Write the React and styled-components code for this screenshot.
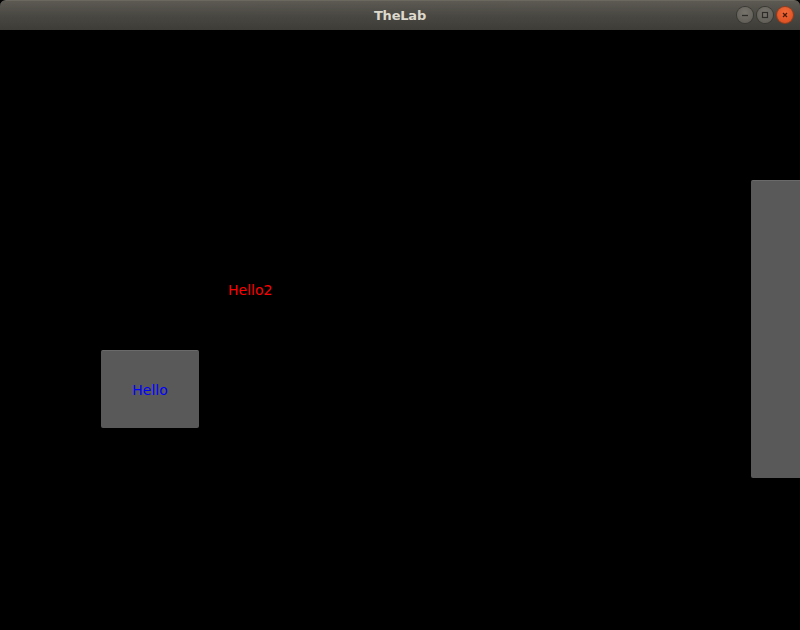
import React from "react";
import styled, { createGlobalStyle } from "styled-components";

const Global = createGlobalStyle`
  html, body { margin: 0; padding: 0; background: #000; }
  body { font-family: "DejaVu Sans", sans-serif; }
`;

const Window = styled.div`
  width: 800px;
  height: 630px;
  display: flex;
  flex-direction: column;
  background: #000;
  overflow: hidden;
`;

const TitleBar = styled.div`
  height: 30px;
  flex: none;
  position: relative;
  display: flex;
  align-items: center;
  justify-content: center;
  background: linear-gradient(#5c5a53, #4a4842 50%, #3e3c37);
  border-top: 1px solid #6b685f;
  box-sizing: border-box;
  border-radius: 6px 6px 0 0;
`;

const Title = styled.span`
  font-family: "DejaVu Sans", sans-serif;
  font-weight: bold;
  font-size: 13px;
  color: #dcd8ce;
  letter-spacing: -0.2px;
`;

const Controls = styled.div`
  position: absolute;
  right: 7px;
  top: 6px;
  display: flex;
  gap: 4px;
`;

const Ctrl = styled.div`
  width: 16px;
  height: 16px;
  border-radius: 50%;
  display: flex;
  align-items: center;
  justify-content: center;
  background: ${(p) =>
    p.$close
      ? "radial-gradient(circle at 50% 35%, #f26b3a, #d9491c)"
      : "radial-gradient(circle at 50% 35%, #77746c, #5a5852)"};
  box-shadow: 0 0 0 1px ${(p) => (p.$close ? "#9c3a17" : "#3a3833")};
`;

const Canvas = styled.div`
  flex: 1;
  position: relative;
  background: #000;
`;

const Panel = styled.div`
  position: absolute;
  left: ${(p) => p.$x}px;
  top: ${(p) => p.$y}px;
  width: ${(p) => p.$w}px;
  height: ${(p) => p.$h}px;
  background: #595959;
  border-top: 1px solid #6a6a6a;
  box-sizing: border-box;
  border-radius: 2px;
  display: flex;
  align-items: center;
  justify-content: center;
`;

const Label = styled.span`
  font-family: "DejaVu Sans", sans-serif;
  font-size: 14px;
  color: ${(p) => p.$color};
`;

const FreeLabel = styled(Label)`
  position: absolute;
  left: ${(p) => p.$x}px;
  top: ${(p) => p.$y}px;
`;

export default function App() {
  return (
    <>
      <Global />
      <Window>
        <TitleBar>
          <Title>TheLab</Title>
          <Controls>
            <Ctrl>
              <svg width="10" height="10" viewBox="0 0 10 10">
                <path d="M2 5.5h6" stroke="#2e2c28" strokeWidth="1.3" />
              </svg>
            </Ctrl>
            <Ctrl>
              <svg width="10" height="10" viewBox="0 0 10 10">
                <rect x="2.5" y="2.5" width="5" height="5" fill="none" stroke="#2e2c28" strokeWidth="1.2" />
              </svg>
            </Ctrl>
            <Ctrl $close>
              <svg width="10" height="10" viewBox="0 0 10 10">
                <path d="M3 3l4 4M7 3l-4 4" stroke="#4a1a08" strokeWidth="1.3" />
              </svg>
            </Ctrl>
          </Controls>
        </TitleBar>
        <Canvas>
          <FreeLabel $x={228} $y={252} $color="#ff0000">Hello2</FreeLabel>
          <Panel $x={101} $y={320} $w={98} $h={78}>
            <Label $color="#0000ff">Hello</Label>
          </Panel>
          <Panel $x={751} $y={150} $w={60} $h={298} />
        </Canvas>
      </Window>
    </>
  );
}
